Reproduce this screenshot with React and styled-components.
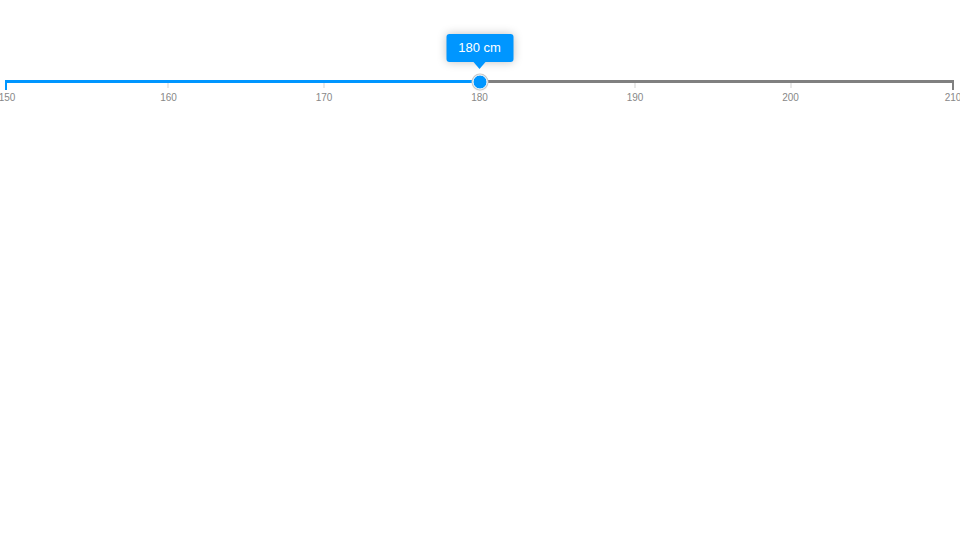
import React from "react";
import styled, { createGlobalStyle } from "styled-components";

const Global = createGlobalStyle`
  html, body { margin: 0; padding: 0; background: #fff; }
  body { font-family: "Liberation Sans", Arial, sans-serif; }
`;

const BLUE = "#0096ff";
const GRAY = "#808080";

const Page = styled.div`
  width: 960px;
  height: 540px;
  padding: 80px 6px 0 5px;
  box-sizing: border-box;
  overflow: hidden;
`;

const Slider = styled.div`
  position: relative;
  width: 949px;
  height: 30px;
`;

const Track = styled.div`
  position: relative;
  height: 3px;
  background: ${GRAY};
`;

const Fill = styled.div`
  height: 100%;
  background: ${BLUE};
`;

const EndTick = styled.div`
  position: absolute;
  top: 0;
  width: 2px;
  height: 10px;
  background: ${(p) => (p.$active ? BLUE : GRAY)};
  ${(p) => (p.$side === "left" ? "left: 0;" : "right: 0;")}
`;

const Tick = styled.div`
  position: absolute;
  top: 3px;
  width: 1px;
  height: 5px;
  background: #d4d4d4;
  transform: translateX(-50%);
`;

const Label = styled.span`
  position: absolute;
  top: 12px;
  transform: translateX(-50%);
  font-size: 10px;
  line-height: 12px;
  color: #888;
  white-space: nowrap;
`;

const Thumb = styled.div`
  position: absolute;
  top: 2px;
  width: 13px;
  height: 13px;
  border-radius: 50%;
  background: ${BLUE};
  border: 1.5px solid #fff;
  box-shadow: 0 0 0 1px #c8c8c8, 0 1px 2px rgba(0, 0, 0, 0.15);
  transform: translate(-50%, -50%);
`;

const Tooltip = styled.div`
  position: absolute;
  top: -46px;
  transform: translateX(-50%);
  width: 67px;
  height: 28px;
  box-sizing: border-box;
  border-radius: 3px;
  background: ${BLUE};
  color: #fff;
  font-size: 13px;
  line-height: 28px;
  text-align: center;
  white-space: nowrap;
  box-shadow: 0 0 10px rgba(0, 0, 0, 0.25);

  &::after {
    content: "";
    position: absolute;
    left: 50%;
    top: 100%;
    margin-left: -6px;
    border-left: 6px solid transparent;
    border-right: 6px solid transparent;
    border-top: 7px solid ${BLUE};
  }
`;

const MIN = 150;
const MAX = 210;
const STEP = 10;
const VALUE = 180;
const INSET = 8;

const pos = (v) => {
  const p = (v - MIN) / (MAX - MIN);
  return `calc(${INSET}px + (100% - ${INSET * 2}px) * ${p})`;
};

export default function App() {
  const marks = [];
  for (let v = MIN; v <= MAX; v += STEP) marks.push(v);
  const fillPos = pos(VALUE);
  return (
    <>
      <Global />
      <Page>
        <Slider>
          <Track>
            <Fill style={{ width: fillPos }} />
          </Track>
          <EndTick $side="left" $active />
          <EndTick $side="right" />
          {marks.slice(1, -1).map((v) => (
            <Tick key={v} style={{ left: pos(v) }} />
          ))}
          {marks.map((v, i) => (
            <Label
              key={v}
              style={{
                left:
                  i === 0 ? "2px" : i === marks.length - 1 ? "calc(100% - 1px)" : pos(v),
              }}
            >
              {v}
            </Label>
          ))}
          <Thumb style={{ left: fillPos }} />
          <Tooltip style={{ left: fillPos }}>{VALUE} cm</Tooltip>
        </Slider>
      </Page>
    </>
  );
}
